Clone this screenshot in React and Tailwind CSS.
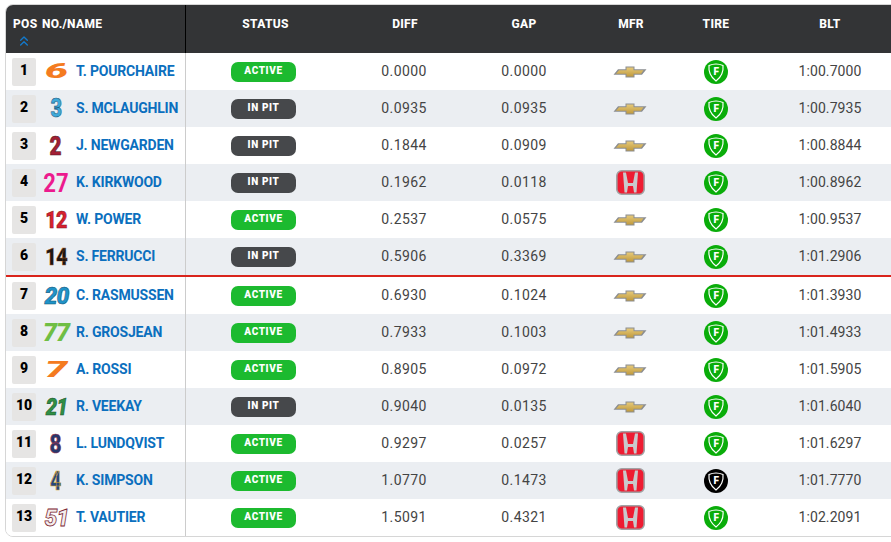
import { ChevronsUp } from "lucide-react"

const rows = [
  { pos: 1, name: "T. POURCHAIRE", status: "ACTIVE", diff: "0.0000", gap: "0.0000", mfr: "chevy", tire: "green", blt: "1:00.7000", no: "6", noClass: "text-[#f47b20] italic font-black text-[23px] scale-x-[1.8] scale-y-[0.85]" },
  { pos: 2, name: "S. MCLAUGHLIN", status: "IN PIT", diff: "0.0935", gap: "0.0935", mfr: "chevy", tire: "green", blt: "1:00.7935", no: "3", noClass: "text-[#3fa9d8] font-black text-[25px] scale-x-[0.8] [-webkit-text-stroke:0.6px_#1f5f85]" },
  { pos: 3, name: "J. NEWGARDEN", status: "IN PIT", diff: "0.1844", gap: "0.0909", mfr: "chevy", tire: "green", blt: "1:00.8844", no: "2", noClass: "text-[#a31f34] font-black text-[26px] scale-x-[0.8] [-webkit-text-stroke:0.6px_#4a1620]" },
  { pos: 4, name: "K. KIRKWOOD", status: "IN PIT", diff: "0.1962", gap: "0.0118", mfr: "honda", tire: "green", blt: "1:00.8962", no: "27", noClass: "text-[#ec1b8e] font-bold text-[26px] scale-x-[0.85]" },
  { pos: 5, name: "W. POWER", status: "ACTIVE", diff: "0.2537", gap: "0.0575", mfr: "chevy", tire: "green", blt: "1:00.9537", no: "12", noClass: "text-[#d7202e] font-black text-[24px] scale-x-[0.82] tracking-[-1px] [-webkit-text-stroke:0.5px_#7a1a22]" },
  { pos: 6, name: "S. FERRUCCI", status: "IN PIT", diff: "0.5906", gap: "0.3369", mfr: "chevy", tire: "green", blt: "1:01.2906", no: "14", noClass: "text-[#1d1512] font-black text-[24px] scale-x-[0.85] tracking-[-1px] [-webkit-text-stroke:0.3px_#a85a20]" },
  { pos: 7, name: "C. RASMUSSEN", status: "ACTIVE", diff: "0.6930", gap: "0.1024", mfr: "chevy", tire: "green", blt: "1:01.3930", no: "20", noClass: "text-[#1f93c9] italic font-black text-[24px] scale-x-[0.95] tracking-[-1px] [-webkit-text-stroke:0.5px_#12506f]" },
  { pos: 8, name: "R. GROSJEAN", status: "ACTIVE", diff: "0.7933", gap: "0.1003", mfr: "chevy", tire: "green", blt: "1:01.4933", no: "77", noClass: "text-[#6fbe44] italic font-black text-[25px] tracking-[-1px]" },
  { pos: 9, name: "A. ROSSI", status: "ACTIVE", diff: "0.8905", gap: "0.0972", mfr: "chevy", tire: "green", blt: "1:01.5905", no: "7", noClass: "text-[#f47b20] italic font-black text-[22px] scale-x-[1.8]" },
  { pos: 10, name: "R. VEEKAY", status: "IN PIT", diff: "0.9040", gap: "0.0135", mfr: "chevy", tire: "green", blt: "1:01.6040", no: "21", noClass: "text-[#2f8f46] italic font-black text-[24px] scale-x-[0.85] tracking-[-1px] [-webkit-text-stroke:0.5px_#174a24]" },
  { pos: 11, name: "L. LUNDQVIST", status: "ACTIVE", diff: "0.9297", gap: "0.0257", mfr: "honda", tire: "green", blt: "1:01.6297", no: "8", noClass: "text-[#27386b] font-black text-[26px] scale-x-[0.8] [-webkit-text-stroke:0.5px_#a8324a]" },
  { pos: 12, name: "K. SIMPSON", status: "ACTIVE", diff: "1.0770", gap: "0.1473", mfr: "honda", tire: "black", blt: "1:01.7770", no: "4", noClass: "text-[#26467f] font-black text-[26px] scale-x-[0.75] [-webkit-text-stroke:0.6px_#d9a928]" },
  { pos: 13, name: "T. VAUTIER", status: "ACTIVE", diff: "1.5091", gap: "0.4321", mfr: "honda", tire: "green", blt: "1:02.2091", no: "51", noClass: "text-[#f4eeee] italic font-black text-[24px] scale-x-[0.95] tracking-[-1px] [-webkit-text-stroke:0.8px_#7a2430]" },
]

const Chevy = () => (
  <svg width="34" height="12" viewBox="0 0 34 12" aria-hidden="true">
    <defs>
      <linearGradient id="gold" x1="0" y1="0" x2="0" y2="1">
        <stop offset="0" stopColor="#e6c978" />
        <stop offset="1" stopColor="#c09a3e" />
      </linearGradient>
    </defs>
    <path d="M5 3.2 H12.5 V0.5 H21.5 V3.2 H33.5 L29 8.8 H21.5 V11.5 H12.5 V8.8 H0.5 Z" fill="#8b8d90" />
    <path d="M6 4.2 H13.5 V1.5 H20.5 V4.2 H30.5 L28 7.8 H20.5 V10.5 H13.5 V7.8 H3 Z" fill="url(#gold)" />
  </svg>
)

const Honda = () => (
  <svg width="29" height="25" viewBox="0 0 29 25" aria-hidden="true">
    <rect x="0.8" y="0.8" width="27.4" height="23.4" rx="5" fill="#ee1c32" stroke="#a2a2a4" strokeWidth="1.6" />
    <path d="M7 2.5 H10 L12 13 H17 L19 2.5 H22 L20.5 22.5 H18 L17 16 H12 L11 22.5 H8.5 Z" fill="#c9c9cc" />
  </svg>
)

const Tire = ({ color }) => (
  <svg width="24" height="24" viewBox="0 0 24 24" aria-hidden="true">
    <circle cx="12" cy="12" r="12" fill={color === "black" ? "#000000" : "#0aad0a"} />
    <path d="M5 5.5 Q12 2.5 19 5.5 Q20 15 12 21 Q4 15 5 5.5 Z" fill="none" stroke="#ffffff" strokeWidth="1.2" />
    <text x="12.2" y="15" textAnchor="middle" fontSize="10" fontWeight="900" fontFamily="Roboto, sans-serif" fill="#ffffff">F</text>
  </svg>
)

const Row = ({ row, index }) => (
  <div className={`flex h-[37px] items-center ${index % 2 ? "bg-[#ebeef2]" : "bg-white"}`}>
    <div className="flex h-full w-[180px] shrink-0 items-center border-r border-[#cccccc] pl-[6px]">
      <div className="flex h-[28px] w-[24px] shrink-0 items-center justify-center rounded-[2px] bg-[#e6e5e4] pb-[3px] text-[14px] font-black text-black">
        {row.pos}
      </div>
      <div className="flex w-[40px] shrink-0 justify-center">
        <span className={`inline-block leading-none ${row.noClass}`}>{row.no}</span>
      </div>
      <span className="whitespace-nowrap text-[14px] font-bold tracking-[-0.2px] text-[#0b6fbe]">{row.name}</span>
    </div>
    <div className="flex w-[155px] shrink-0 justify-center">
      <span className={`flex h-[20px] w-[65px] items-center justify-center rounded-[7px] pb-[2px] text-[10px] font-black tracking-[0.6px] text-white ${row.status === "ACTIVE" ? "bg-[#1cba2f]" : "bg-[#46484b]"}`}>
        {row.status}
      </span>
    </div>
    <div className="w-[126px] shrink-0 text-center text-[14px] tracking-[0.4px] text-[#444444]">{row.diff}</div>
    <div className="w-[114px] shrink-0 text-center text-[14px] tracking-[0.4px] text-[#444444]">{row.gap}</div>
    <div className="flex w-[98px] shrink-0 justify-center">{row.mfr === "chevy" ? <Chevy /> : <Honda />}</div>
    <div className="flex w-[74px] shrink-0 justify-center"><Tire color={row.tire} /></div>
    <div className="w-[154px] shrink-0 text-center text-[14px] tracking-[0.1px] text-[#444444]">{row.blt}</div>
  </div>
)

const Th = ({ className, children }) => <div className={`shrink-0 pt-[10px] text-center ${className}`}>{children}</div>

export default function App() {
  return (
    <div className="h-[542px] w-[891px] overflow-hidden bg-white pt-[4px] pl-[5px] font-['Roboto',sans-serif]">
      <div className="w-[902px] overflow-hidden rounded-[8px] border border-[#d6d6d6]">
        <div className="flex h-[48px] bg-[#333436] text-[12px] font-extrabold tracking-[0.3px] text-white">
          <div className="flex h-full w-[180px] shrink-0 border-r border-black pl-[7px] pt-[10px]">
            <div className="flex w-[29px] shrink-0 flex-col items-start">
              <span>POS</span>
              <ChevronsUp className="ml-[3px] h-[16px] w-[16px] text-[#1279cc]" />
            </div>
            <span>NO./NAME</span>
          </div>
          <Th className="w-[159px]">STATUS</Th>
          <Th className="w-[120px]">DIFF</Th>
          <Th className="w-[118px]">GAP</Th>
          <Th className="w-[96px]">MFR</Th>
          <Th className="w-[74px]">TIRE</Th>
          <Th className="w-[154px]">BLT</Th>
        </div>
        {rows.map((row, i) => (
          <div key={row.pos}>
            {i === 6 && <div className="h-[2px] bg-[#d9241c]" />}
            <Row row={row} index={i} />
          </div>
        ))}
      </div>
    </div>
  )
}
